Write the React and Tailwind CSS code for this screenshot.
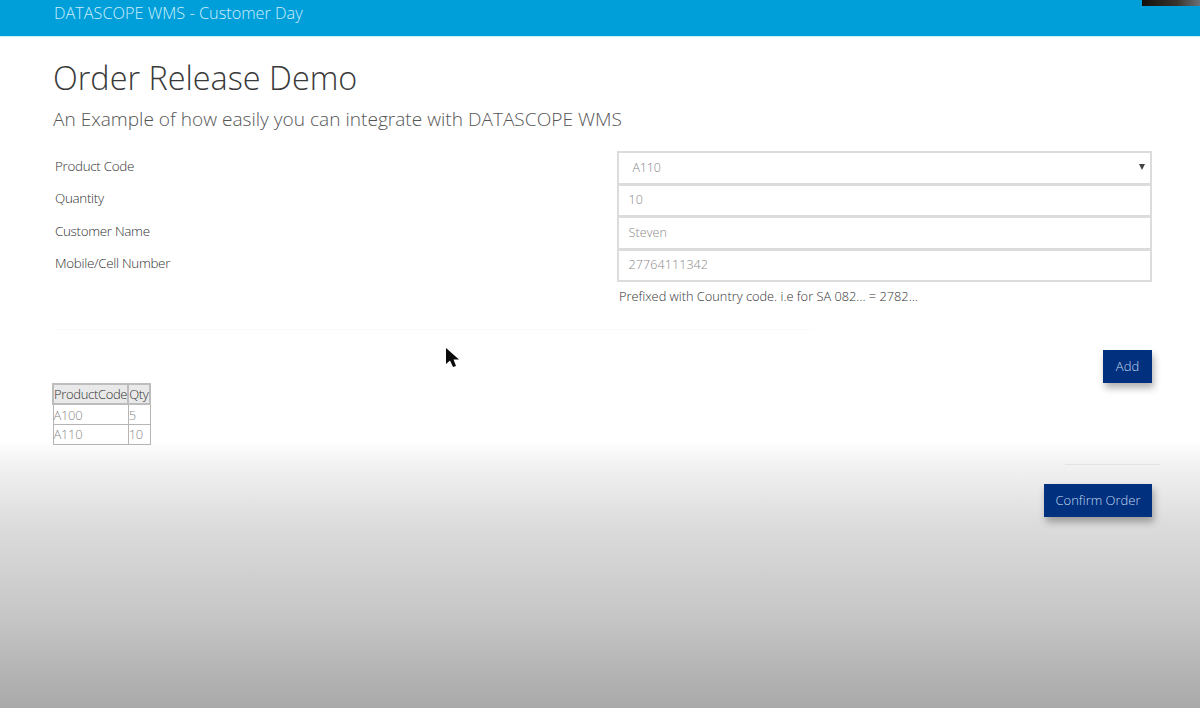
const font = { fontFamily: '"Open Sans", "Noto Sans", sans-serif' };

function Field({ label, value, select }) {
  return (
    <div className="grid grid-cols-[563.5px_535.5px] h-[32.6px]">
      <div className="text-[13.4px] font-light text-[#333] pl-[2px] pt-[4.5px] tracking-[-0.3px] leading-[20px]">{label}</div>
      <div className={`relative flex items-center border-2 border-[#dcdcdc] -mb-[1px] bg-white text-[12.5px] font-light text-[#888] ${select ? "pl-[14px] pt-[2px] tracking-[-0.2px]" : "pl-[10px] tracking-[0.1px]"}`}>
        {value}
        {select && <span className="absolute right-[5px] top-[11px] w-0 h-0 border-x-[3px] border-x-transparent border-t-[6px] border-t-[#444]" />}
      </div>
    </div>
  );
}

function Btn({ children, className }) {
  return (
    <div className={`flex items-center justify-center h-[33px] bg-[#00307e] text-[#c3d9f0] text-[13px] font-light shadow-[2px_5px_7px_rgba(0,0,0,0.3)] ${className}`}>
      {children}
    </div>
  );
}

export default function App() {
  return (
    <div style={font} className="relative h-[708px] w-[1200px] overflow-hidden bg-[linear-gradient(to_bottom,#ffffff_0,#ffffff_440px,#f0f0f0_470px,#dcdcdc_525px,#c8c8c8_610px,#a9a9a9_708px)]">
      <header className="h-[37px] bg-[#009fda] pl-[54px] pt-[1px] text-[16.3px] font-light leading-[24px] text-[#cdeefa] border-b border-[#c8f2fb]">
        DATASCOPE WMS - Customer Day
      </header>
      <main className="pl-[53px] w-[1152px]">
        <h1 className="mt-[18px] text-[32.4px] leading-[44px] font-light text-[#3a3a3a]">Order Release Demo</h1>
        <p className="mt-[8px] text-[19.1px] leading-[24px] font-light text-[#555]">An Example of how easily you can integrate with DATASCOPE WMS</p>
        <section className="mt-[20px]">
          <Field label="Product Code" value="A110" select />
          <Field label="Quantity" value="10" />
          <Field label="Customer Name" value="Steven" />
          <Field label="Mobile/Cell Number" value="27764111342" />
        </section>
        <p className="ml-[566px] mt-[6px] text-[12.8px] leading-[18px] font-light text-[#333]">Prefixed with Country code. i.e for SA 082... = 2782...</p>
        <div className="mt-[24px] h-px w-[760px] bg-[#fafafa]" />
        <div className="flex justify-end mt-[20px]"><Btn className="w-[49px]">Add</Btn></div>
        <table className="-ml-[1px] mt-0 border-collapse text-[13px] font-light tracking-[-0.33px] leading-[18px]">
          <thead>
            <tr className="bg-[#e9e9e9] text-[#333]">
              <th className="border-2 border-[#bdbdbd] font-light text-left h-[20px] w-[75px] p-0">ProductCode</th>
              <th className="border-2 border-[#bdbdbd] font-light text-left w-[22px] p-0">Qty</th>
            </tr>
          </thead>
          <tbody className="text-[#888]">
            <tr><td className="border border-[#b5b5b5] h-[20px] p-0">A100</td><td className="border border-[#b5b5b5] p-0">5</td></tr>
            <tr><td className="border border-[#b5b5b5] h-[20px] p-0">A110</td><td className="border border-[#b5b5b5] p-0">10</td></tr>
          </tbody>
        </table>
        <div className="mt-[19px] flex justify-end"><div className="h-px w-[95px] -mr-[8px] bg-[#e4e4e4]" /></div>
        <div className="flex justify-end mt-[19px]"><Btn className="w-[108px]">Confirm Order</Btn></div>
      </main>
      <div className="absolute right-0 top-0 h-[6px] w-[58px] bg-[linear-gradient(to_right,#14100c_0,#3a332c_60%,#6b7078_100%)]" />
      <svg className="absolute left-[445px] top-[347px]" width="15" height="22" viewBox="0 0 15 22">
        <path d="M1 1 L1 17 L5 13.5 L8 20 L11 19 L8.5 12.5 L14 12.5 Z" fill="#0a0a0a" />
      </svg>
    </div>
  );
}
